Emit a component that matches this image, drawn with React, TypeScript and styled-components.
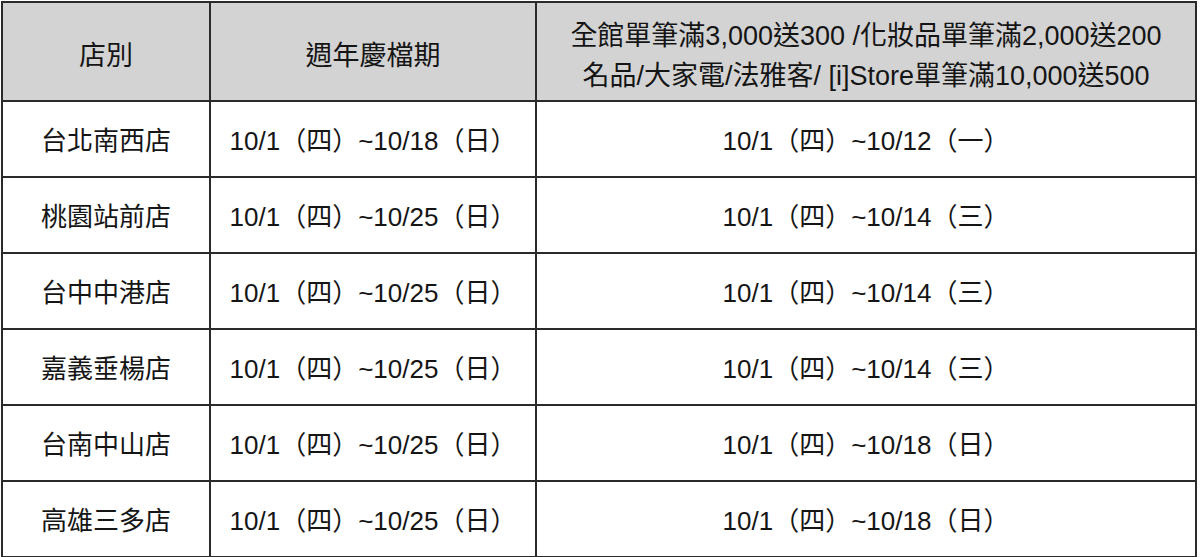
import * as React from 'react';
import styled, { createGlobalStyle } from 'styled-components';

const GlobalStyle = createGlobalStyle`
  html, body {
    margin: 0;
    padding: 0;
    background: #ffffff;
  }
  body {
    font-family: "Liberation Sans", "Noto Sans CJK TC", Arial, sans-serif;
    color: #151515;
  }
`;

const StyledPage = styled.div`
  padding: 1px 0 0 1px;
  width: 1200px;
  height: 557px;
  box-sizing: border-box;
`;

const StyledTable = styled.table`
  border-collapse: collapse;
  width: 1196px;
  table-layout: fixed;
  font-size: 26px;
`;

const StyledHeadCell = styled.th<{ $width?: number }>`
  width: ${(p) => (p.$width ? `${p.$width}px` : 'auto')};
  height: 99px;
  padding: 8px 0 0;
  box-sizing: border-box;
  background: #d3d3d3;
  border: 2px solid #2a2a2a;
  font-weight: normal;
  font-size: 27px;
  text-align: center;
  vertical-align: middle;
  line-height: 40px;
`;

const StyledCell = styled.td`
  height: 76px;
  padding: 3px 0 0;
  box-sizing: border-box;
  border: 2px solid #2a2a2a;
  text-align: center;
  vertical-align: middle;
  line-height: 30px;
`;

interface StoreRow {
  store: string;
  anniversary: string;
  promo: string;
}

const ROWS: StoreRow[] = [
  { store: '台北南西店', anniversary: '10/1（四）~10/18（日）', promo: '10/1（四）~10/12（一）' },
  { store: '桃園站前店', anniversary: '10/1（四）~10/25（日）', promo: '10/1（四）~10/14（三）' },
  { store: '台中中港店', anniversary: '10/1（四）~10/25（日）', promo: '10/1（四）~10/14（三）' },
  { store: '嘉義垂楊店', anniversary: '10/1（四）~10/25（日）', promo: '10/1（四）~10/14（三）' },
  { store: '台南中山店', anniversary: '10/1（四）~10/25（日）', promo: '10/1（四）~10/18（日）' },
  { store: '高雄三多店', anniversary: '10/1（四）~10/25（日）', promo: '10/1（四）~10/18（日）' },
];

export default function App() {
  return (
    <StyledPage>
      <GlobalStyle />
      <StyledTable>
        <thead>
          <tr>
            <StyledHeadCell $width={208}>店別</StyledHeadCell>
            <StyledHeadCell $width={326}>週年慶檔期</StyledHeadCell>
            <StyledHeadCell>
              全館單筆滿3,000送300 /化妝品單筆滿2,000送200
              <br />
              名品/大家電/法雅客/ [i]Store單筆滿10,000送500
            </StyledHeadCell>
          </tr>
        </thead>
        <tbody>
          {ROWS.map((row) => (
            <tr key={row.store}>
              <StyledCell>{row.store}</StyledCell>
              <StyledCell>{row.anniversary}</StyledCell>
              <StyledCell>{row.promo}</StyledCell>
            </tr>
          ))}
        </tbody>
      </StyledTable>
    </StyledPage>
  );
}
